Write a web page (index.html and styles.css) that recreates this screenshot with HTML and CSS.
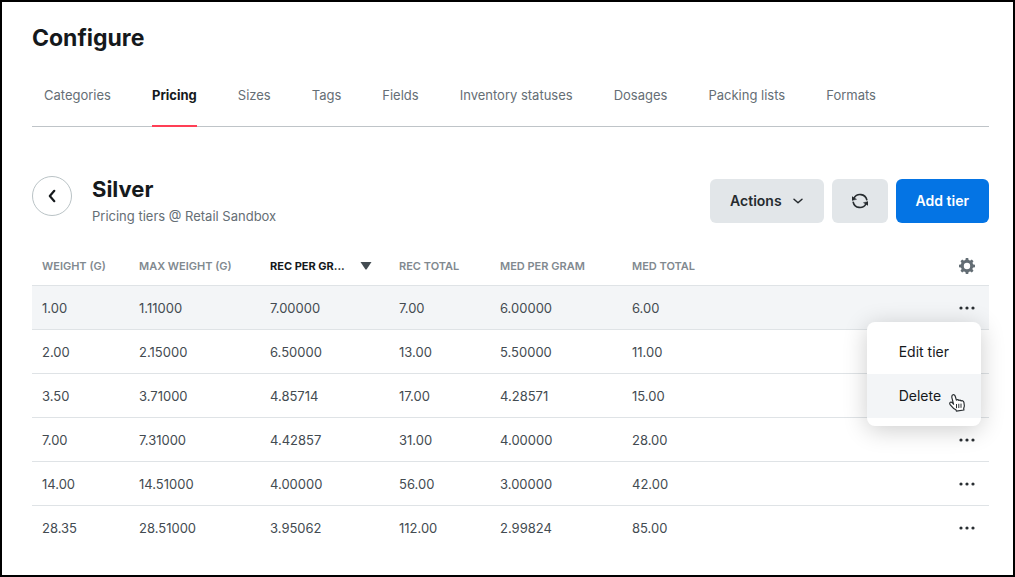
FILE: index.html
```html
<!DOCTYPE html>
<html lang="en">
<head>
<meta charset="utf-8">
<meta name="viewport" content="width=device-width, initial-scale=1">
<title>Configure</title>
<link rel="stylesheet" href="styles.css">
</head>
<body>
<svg class="sprite" aria-hidden="true">
  <symbol id="dots" viewBox="0 0 16 4">
    <circle cx="2" cy="2" r="1.6"/><circle cx="8" cy="2" r="1.6"/><circle cx="14" cy="2" r="1.6"/>
  </symbol>
</svg>
<main class="page">
  <h1 class="title">Configure</h1>
  <nav class="tabs">
    <a class="tab" href="#">Categories</a>
    <a class="tab tab-active" href="#" aria-current="page">Pricing</a>
    <a class="tab" href="#">Sizes</a>
    <a class="tab" href="#">Tags</a>
    <a class="tab" href="#">Fields</a>
    <a class="tab" href="#">Inventory statuses</a>
    <a class="tab" href="#">Dosages</a>
    <a class="tab" href="#">Packing lists</a>
    <a class="tab" href="#">Formats</a>
  </nav>
  <header class="toolbar">
    <button class="back" type="button" aria-label="Back">
      <svg width="8" height="14" viewBox="0 0 8 14" fill="none" stroke="currentColor" stroke-width="2.2" stroke-linecap="round" stroke-linejoin="round"><path d="M6.3 1.8 1.8 7l4.500 5.200"/></svg>
    </button>
    <div class="heading">
      <h2 class="name">Silver</h2>
      <p class="sub">Pricing tiers @ Retail Sandbox</p>
    </div>
    <div class="actions">
      <button class="btn" type="button">Actions
        <svg width="12" height="8" viewBox="0 0 12 8" fill="none" stroke="currentColor" stroke-width="1.500" stroke-linecap="round" stroke-linejoin="round"><path d="M2 2.200l4 3.600L10 2.200"/></svg>
      </button>
      <button class="btn" type="button" aria-label="Refresh">
        <svg width="16" height="16" viewBox="0 0 16 16"><path d="M2 5.200A6.900 6.900 0 0 1 14.800 6.800M14 10.800A6.900 6.900 0 0 1 1.200 9.200" fill="none" stroke="currentColor" stroke-width="1.600" stroke-linecap="round"/><path d="M0 3.600V7.500L4.600 6.300ZM16 12.400V8.500L11.400 9.700Z" fill="currentColor" stroke="currentColor" stroke-width=".4"/></svg>
      </button>
      <button class="btn btn-primary" type="button">Add tier</button>
    </div>
  </header>
  <table class="tiers">
    <colgroup>
      <col class="c-weight"><col class="c-max"><col class="c-rec"><col class="c-rtotal"><col class="c-med"><col><col class="c-menu">
    </colgroup>
    <thead>
      <tr>
        <th scope="col">Weight (g)</th>
        <th scope="col">Max weight (g)</th>
        <th scope="col" class="sorted" aria-sort="descending"><span class="sort">Rec per gr...<svg width="12" height="8" viewBox="0 0 12 8"><path d="M.5 0h11L6.700 7.200q-.7.800-1.400 0z" fill="#434b51"/></svg></span></th>
        <th scope="col">Rec total</th>
        <th scope="col">Med per gram</th>
        <th scope="col">Med total</th>
        <th scope="col" class="end"><button class="icon" type="button" aria-label="Table settings">
          <svg width="16" height="16" viewBox="0 0 16 16"><g fill="#636d74"><path fill-rule="evenodd" d="M8 1.800a6.200 6.200 0 1 0 0 12.400A6.200 6.200 0 1 0 8 1.800zM8 4.800a3.200 3.200 0 1 1 0 6.400A3.200 3.200 0 1 1 8 4.800z"/><g id="teeth"><path d="M6.800 0h2.400l.6 3H6.200zM6.800 16h2.400l.6-3H6.200zM0 6.800v2.400l3 .6V6.200zM16 6.800v2.400l-3 .6V6.200z"/></g><use href="#teeth" transform="rotate(45 8 8)"/></g></svg>
        </button></th>
      </tr>
    </thead>
    <tbody>
      <tr class="hover"><td>1.00</td><td>1.11000</td><td>7.00000</td><td>7.00</td><td>6.00000</td><td>6.00</td>
        <td class="end"><button class="icon" type="button" aria-label="Row actions" aria-expanded="true"><svg width="16" height="4"><use href="#dots"/></svg></button>
          <div class="menu">
            <button class="item" type="button">Edit tier</button>
            <button class="item item-hover" type="button">Delete</button>
            <svg class="pointer" width="18" height="19" viewBox="0 0 18 19" aria-hidden="true"><path d="M5.600 11.300 4 5.200C3.500 3.600 4 2 5 1.700s1.900.4 2.300 1.800l1.100 3.600c.8-.7 1.900-.5 2.400.3.800-.6 1.900-.3 2.300.5 1.400-.6 2.500.2 2.800 1.400.6 2.300.8 4.300-.2 6.100l.2 1.600-7.500 1.100-.5-1.300c-2.300-1-4-3-5.600-5-.8-1-.8-2 .1-2.500 1.100-.6 2.100.2 3.200 2z" fill="#fff" stroke="#292e32" stroke-width="1.200" stroke-linejoin="round"/><path d="M8.500 11v4.200M10.800 10.800v4.200M13 10.600v4.200" stroke="#292e32" stroke-width="1"/></svg>
          </div></td></tr>
      <tr><td>2.00</td><td>2.15000</td><td>6.50000</td><td>13.00</td><td>5.50000</td><td>11.00</td><td class="end"><button class="icon" type="button" aria-label="Row actions"><svg width="16" height="4"><use href="#dots"/></svg></button></td></tr>
      <tr><td>3.50</td><td>3.71000</td><td>4.85714</td><td>17.00</td><td>4.28571</td><td>15.00</td><td class="end"><button class="icon" type="button" aria-label="Row actions"><svg width="16" height="4"><use href="#dots"/></svg></button></td></tr>
      <tr><td>7.00</td><td>7.31000</td><td>4.42857</td><td>31.00</td><td>4.00000</td><td>28.00</td><td class="end"><button class="icon" type="button" aria-label="Row actions"><svg width="16" height="4"><use href="#dots"/></svg></button></td></tr>
      <tr><td>14.00</td><td>14.51000</td><td>4.00000</td><td>56.00</td><td>3.00000</td><td>42.00</td><td class="end"><button class="icon" type="button" aria-label="Row actions"><svg width="16" height="4"><use href="#dots"/></svg></button></td></tr>
      <tr><td>28.35</td><td>28.51000</td><td>3.95062</td><td>112.00</td><td>2.99824</td><td>85.00</td><td class="end"><button class="icon" type="button" aria-label="Row actions"><svg width="16" height="4"><use href="#dots"/></svg></button></td></tr>
    </tbody>
  </table>
</main>
</body>
</html>
```
FILE: styles.css
```css
* { box-sizing: border-box; }
body {
  margin: 0;
  background: #fff;
  color: #15191c;
  font: 13px/20px Inter, "Liberation Sans", sans-serif;
}
h1, h2, p { margin: 0; }
button {
  margin: 0;
  border: 0;
  background: none;
  color: inherit;
  font: inherit;
  cursor: pointer;
}
svg { display: block; flex: none; }
.sprite { position: absolute; width: 0; height: 0; }
.page {
  min-height: 100vh;
  padding: 20px 24px 20px 30px;
  border: 2px solid #000;
}
.title { font-size: 23px; line-height: 32px; font-weight: 700; }
.tabs {
  display: flex;
  gap: 41px;
  margin-top: 19px;
  padding: 0 12px;
  border-bottom: 1px solid #bfc4c8;
}
.tab {
  margin-bottom: -1px;
  padding: 12px 0 20px;
  border-bottom: 2px solid transparent;
  color: #656e75;
  text-decoration: none;
  white-space: nowrap;
}
.tab-active { border-color: #ff3f55; color: #15191c; font-weight: 700; }
.toolbar { display: flex; align-items: flex-start; margin-top: 48px; }
.back {
  display: flex;
  align-items: center;
  justify-content: center;
  width: 40px;
  height: 40px;
  margin-top: 1px;
  padding: 0;
  border: 1px solid #bac3c6;
  border-radius: 50%;
}
.heading { margin-left: 20px; }
.name { font-size: 22px; line-height: 28px; font-weight: 700; }
.sub { margin-top: 3px; color: #656e75; }
.actions { display: flex; gap: 8px; margin: 4px 0 0 auto; }
.btn {
  display: flex;
  align-items: center;
  gap: 10px;
  height: 44px;
  padding: 0 20px;
  border-radius: 6px;
  background: #e2e6e9;
  color: #262b2f;
  font-size: 14px;
  font-weight: 600;
}
.btn-primary { background: #0474e4; color: #fff; }
.tiers {
  width: 100%;
  margin-top: 20px;
  border-spacing: 0;
  table-layout: fixed;
}
.c-weight { width: 97px; }
.c-max { width: 131px; }
.c-rec { width: 129px; }
.c-rtotal { width: 101px; }
.c-med { width: 132px; }
.c-menu { width: 48px; }
th, td {
  height: 44px;
  padding: 0 10px;
  border-bottom: 1px solid #dfe3e6;
  text-align: left;
  white-space: nowrap;
}
th {
  height: 40px;
  color: #81898f;
  font-size: 11px;
  font-weight: 600;
  text-transform: uppercase;
}
td { color: #434b51; }
.sorted { color: #15191c; font-weight: 700; }
.sort { display: flex; align-items: center; gap: 15px; }
.hover td { background: #f3f5f7; }
tbody tr:last-child td { border-bottom: 0; }
.end { position: relative; padding: 0 14px; }
.icon { display: flex; align-items: center; height: 24px; padding: 0; margin-left: auto; fill: #292e32; }
.menu {
  position: absolute;
  z-index: 1;
  top: 36px;
  right: 8px;
  padding: 8px 0;
  border-radius: 8px;
  background: #fff;
  box-shadow: 0 4px 24px rgba(0, 0, 0, .2);
}
.item {
  display: block;
  width: 100%;
  height: 44px;
  padding: 0 32px;
  color: #15191c;
  font-size: 14px;
  text-align: left;
}
.item-hover { background: #f3f5f7; }
.pointer { position: absolute; right: 15px; bottom: 14px; }
```
